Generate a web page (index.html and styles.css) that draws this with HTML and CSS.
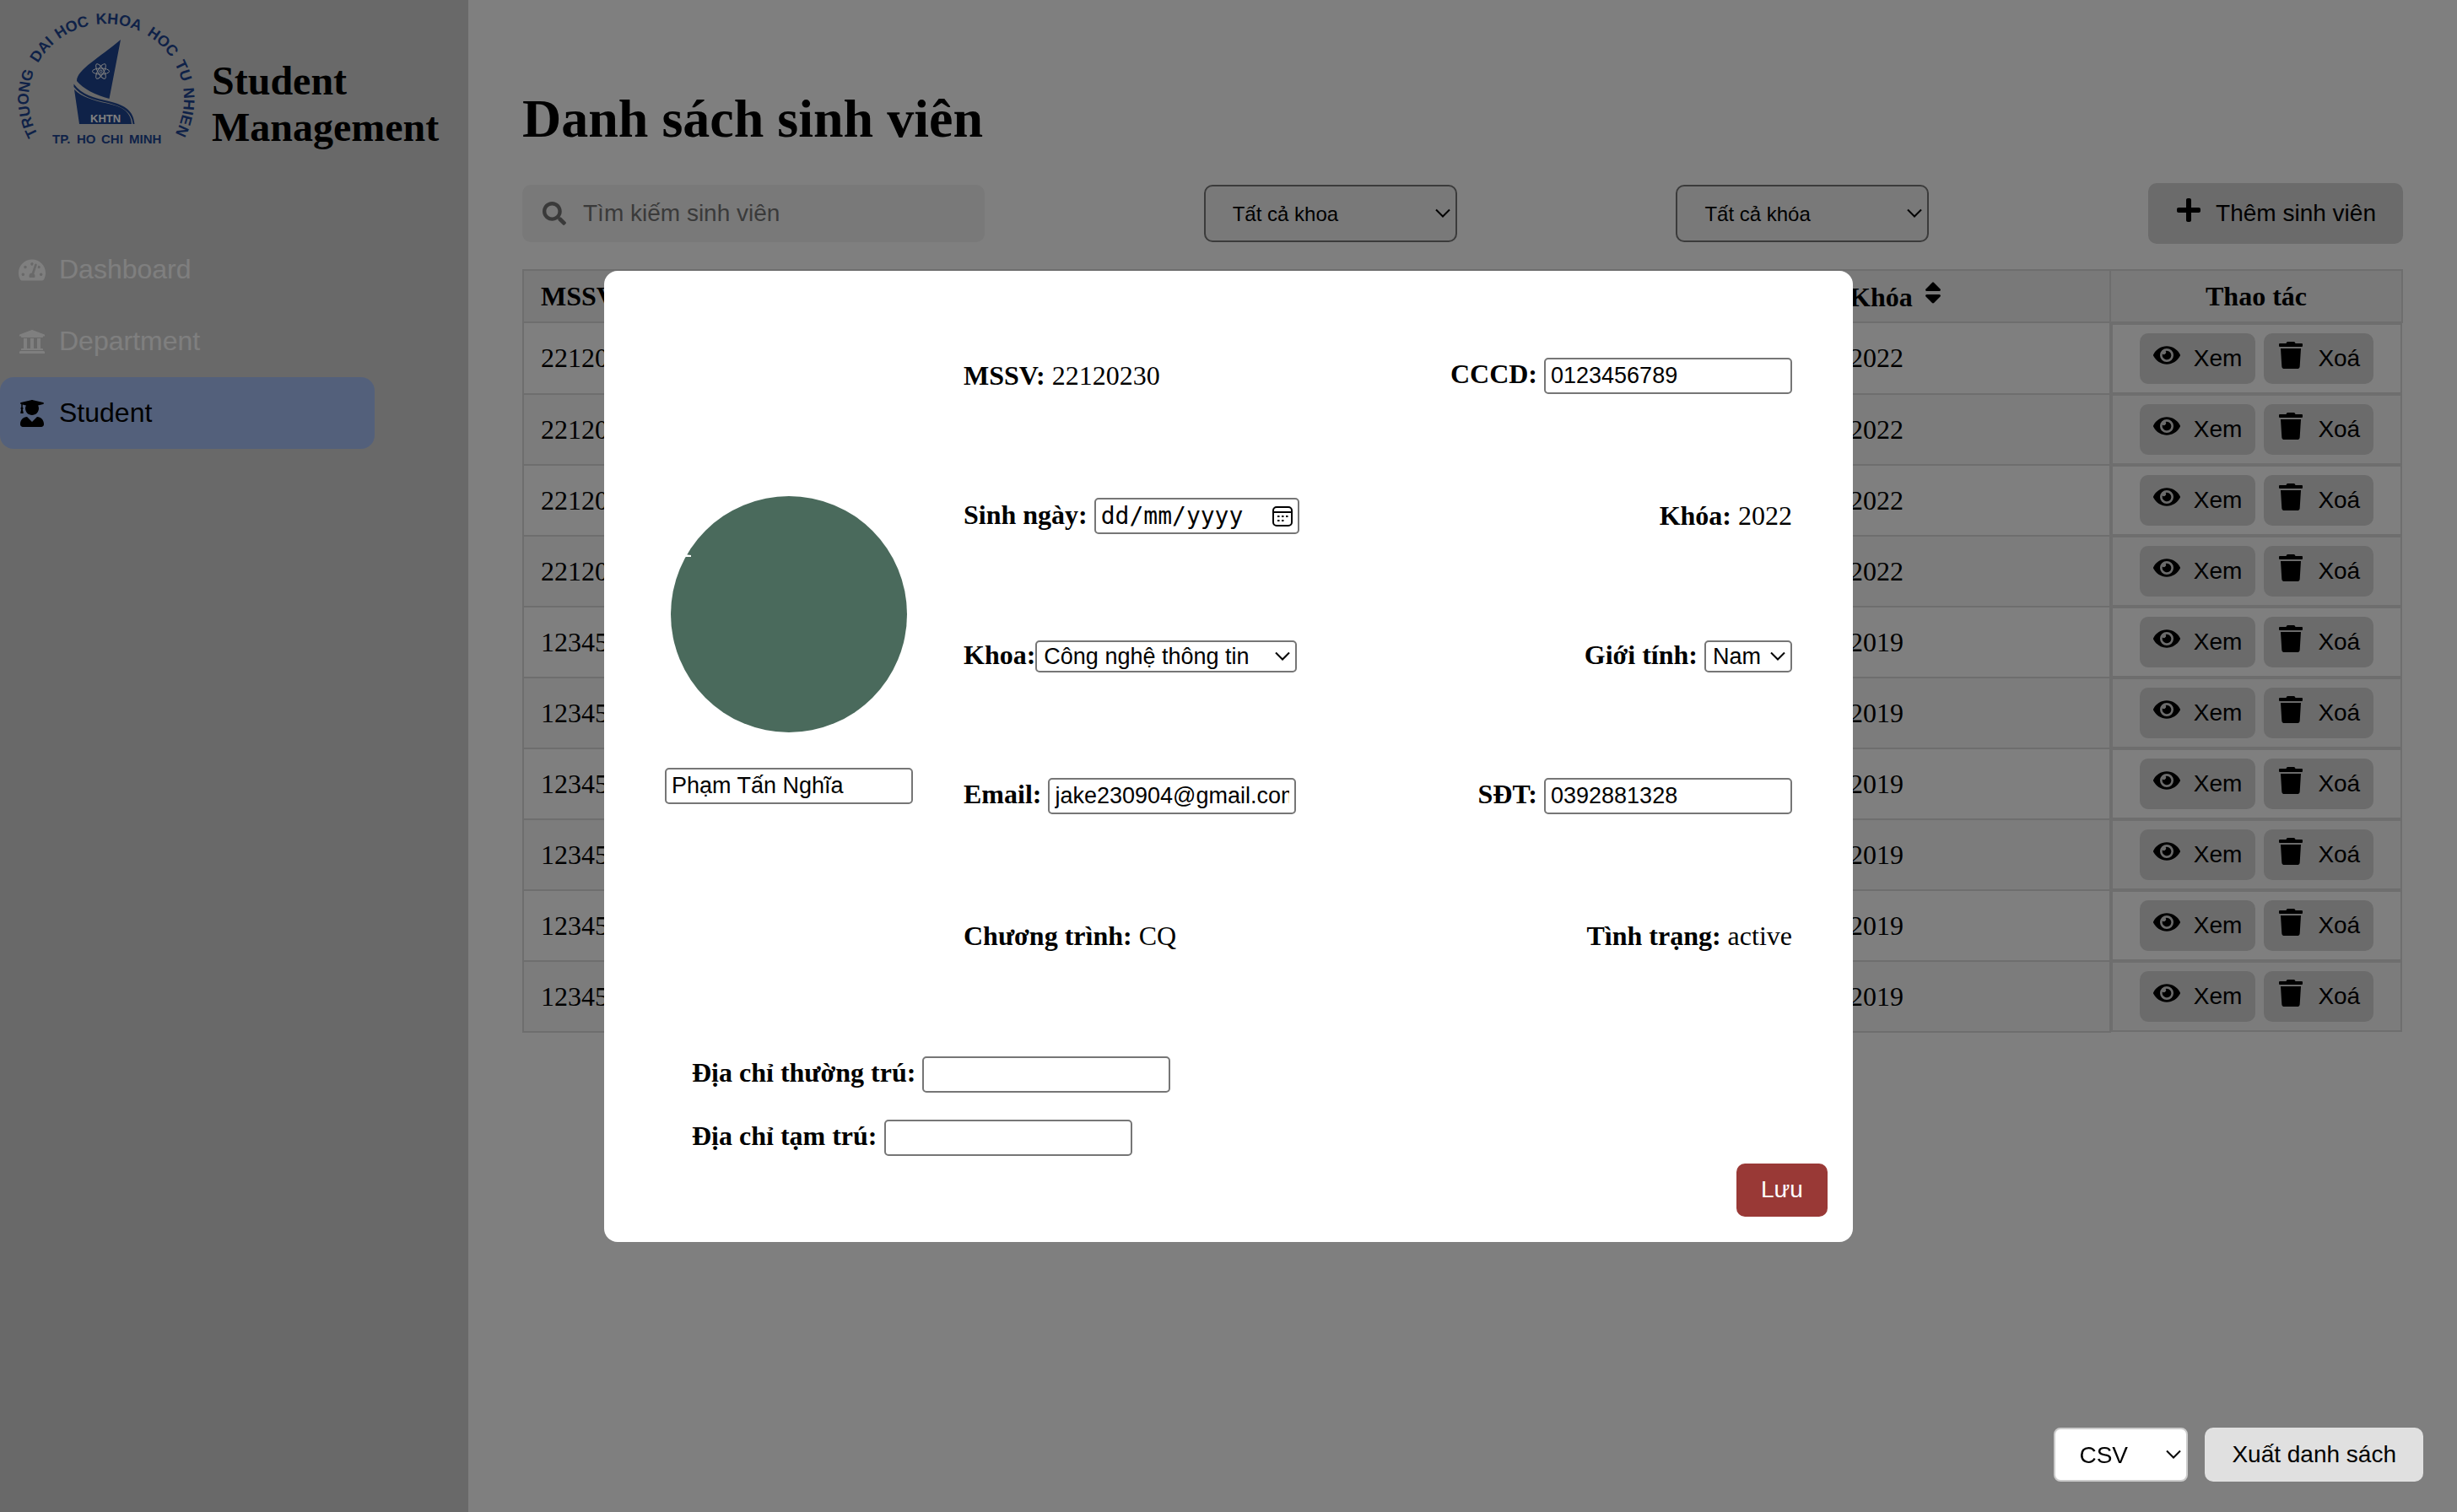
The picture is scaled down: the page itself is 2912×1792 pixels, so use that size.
FILE: index.html
```html
<!DOCTYPE html>
<html lang="vi">
<head>
<meta charset="utf-8">
<meta name="viewport" content="width=device-width, initial-scale=1">
<title>Student Management</title>
<link rel="stylesheet" href="styles.css">
</head>
<body>
<svg class="sprite" aria-hidden="true">
  <symbol id="i-gauge" viewBox="0 0 576 512"><path d="M288 32C128.94 32 0 160.94 0 320c0 52.8 14.25 102.26 39.06 144.8 5.61 9.62 16.3 15.2 27.44 15.2h443c11.14 0 21.83-5.58 27.44-15.2C561.75 422.26 576 372.8 576 320c0-159.06-128.94-288-288-288zm0 64c14.71 0 26.58 10.13 30.32 23.65-1.11 2.26-2.64 4.23-3.45 6.67l-9.22 27.67c-5.13 3.49-10.97 6.01-17.64 6.01-17.67 0-32-14.33-32-32S270.33 96 288 96zM96 384c-17.67 0-32-14.33-32-32s14.33-32 32-32 32 14.33 32 32-14.33 32-32 32zm48-160c-17.67 0-32-14.33-32-32s14.33-32 32-32 32 14.33 32 32-14.33 32-32 32zm246.77-72.41l-61.33 184C343.13 347.33 352 364.54 352 384c0 11.72-3.38 22.55-8.88 32H232.88c-5.5-9.45-8.88-20.28-8.88-32 0-33.94 26.5-61.43 59.9-63.59l61.34-184.01c4.17-12.56 17.73-19.45 30.36-15.17 12.57 4.19 19.35 17.79 15.17 30.36zm14.66 57.2l15.52-46.55c3.47-1.29 7.13-2.23 11.05-2.23 17.67 0 32 14.33 32 32s-14.33 32-32 32c-11.38-.01-20.89-6.28-26.57-15.22zM480 384c-17.67 0-32-14.33-32-32s14.33-32 32-32 32 14.33 32 32-14.33 32-32 32z"/></symbol>
  <symbol id="i-university" viewBox="0 0 512 512"><path d="M496 128v16a8 8 0 0 1-8 8h-24v12c0 6.627-5.373 12-12 12H60c-6.627 0-12-5.373-12-12v-12H24a8 8 0 0 1-8-8v-16a8 8 0 0 1 4.941-7.392l232-88a7.996 7.996 0 0 1 6.118 0l232 88A8 8 0 0 1 496 128zm-24 304H40c-13.255 0-24 10.745-24 24v16a8 8 0 0 0 8 8h464a8 8 0 0 0 8-8v-16c0-13.255-10.745-24-24-24zM96 192v192H60c-6.627 0-12 5.373-12 12v20h416v-20c0-6.627-5.373-12-12-12h-36V192h-64v192h-64V192h-64v192h-64V192H96z"/></symbol>
  <symbol id="i-graduate" viewBox="0 0 448 512"><path d="M319.4 320.6L224 416l-95.4-95.4C57.1 323.7 0 382.2 0 454.4v9.6c0 26.5 21.5 48 48 48h352c26.5 0 48-21.5 48-48v-9.6c0-72.2-57.1-130.7-128.6-133.8zM13.6 79.8l6.4 1.5v58.4c-7 4.2-12 11.5-12 20.3 0 8.4 4.6 15.4 11.1 19.7L3.5 242c-1.7 6.9 2.1 14 7.6 14h41.8c5.5 0 9.3-7.1 7.6-14l-15.6-62.3C51.4 175.4 56 168.4 56 160c0-8.8-5-16.1-12-20.3V87.1l66 15.9c-8.6 17.2-14 36.4-14 57 0 70.7 57.3 128 128 128s128-57.3 128-128c0-20.6-5.3-39.8-14-57l96.3-23.2c18.2-4.4 18.2-27.1 0-31.5l-190.4-46c-13-3.1-26.7-3.1-39.7 0L13.6 48.2c-18.1 4.4-18.1 27.2 0 31.6z"/></symbol>
  <symbol id="i-search" viewBox="0 0 512 512"><path d="M505 442.7L405.3 343c-4.5-4.5-10.6-7-17-7H372c27.6-35.3 44-79.7 44-128C416 93.1 322.9 0 208 0S0 93.1 0 208s93.1 208 208 208c48.3 0 92.7-16.4 128-44v16.3c0 6.4 2.5 12.5 7 17l99.7 99.7c9.4 9.4 24.6 9.4 33.9 0l28.3-28.3c9.4-9.4 9.4-24.6.1-34zM208 336c-70.7 0-128-57.2-128-128 0-70.7 57.2-128 128-128 70.7 0 128 57.2 128 128 0 70.7-57.2 128-128 128z"/></symbol>
  <symbol id="i-plus" viewBox="0 0 448 512"><path d="M416 208H272V64c0-17.67-14.33-32-32-32h-32c-17.67 0-32 14.33-32 32v144H32c-17.67 0-32 14.33-32 32v32c0 17.67 14.33 32 32 32h144v144c0 17.67 14.33 32 32 32h32c17.67 0 32-14.33 32-32V304h144c17.67 0 32-14.33 32-32v-32c0-17.67-14.33-32-32-32z"/></symbol>
  <symbol id="i-sort" viewBox="0 0 320 512"><path d="M41 288h238c21.4 0 32.1 25.9 17 41L177 448c-9.4 9.4-24.6 9.4-33.9 0L24 329c-15.1-15.1-4.4-41 17-41zm255-105L177 64c-9.4-9.4-24.6-9.4-33.9 0L24 183c-15.1 15.1-4.4 41 17 41h238c21.4 0 32.1-25.9 17-41z"/></symbol>
  <symbol id="i-eye" viewBox="0 0 576 512"><path d="M572.52 241.4C518.29 135.59 410.93 64 288 64S57.68 135.64 3.48 241.41a32.35 32.35 0 0 0 0 29.19C57.71 376.41 165.07 448 288 448s230.32-71.64 284.52-177.41a32.35 32.35 0 0 0 0-29.19zM288 400a144 144 0 1 1 144-144 143.93 143.93 0 0 1-144 144zm0-240a95.31 95.31 0 0 0-25.31 3.79 47.85 47.85 0 0 1-66.9 66.9A95.78 95.78 0 1 0 288 160z"/></symbol>
  <symbol id="i-trash" viewBox="0 0 448 512"><path d="M432 32H312l-9.4-18.7A24 24 0 0 0 281.1 0H166.8a23.72 23.72 0 0 0-21.4 13.3L136 32H16A16 16 0 0 0 0 48v32a16 16 0 0 0 16 16h416a16 16 0 0 0 16-16V48a16 16 0 0 0-16-16zM53.2 467a48 48 0 0 0 47.9 45h245.8a48 48 0 0 0 47.9-45L416 128H32z"/></symbol>
</svg>

<div class="app">
  <aside class="sidebar">
    <div class="brand">
      <svg class="logo" viewBox="0 0 236 190" role="img" aria-label="KHTN">
        <defs><path id="arc" d="M45 159.500A92 89 0 1 1 207 159.500"/></defs>
        <g class="logo-ring">
          <text><textPath href="#arc" startOffset="0">TRUONG</textPath></text>
          <text><textPath href="#arc" startOffset="88">DAI</textPath></text>
          <text><textPath href="#arc" startOffset="126">HOC</textPath></text>
          <text><textPath href="#arc" startOffset="174">KHOA</textPath></text>
          <text><textPath href="#arc" startOffset="236">HOC</textPath></text>
          <text><textPath href="#arc" startOffset="284">TU</textPath></text>
          <text><textPath href="#arc" startOffset="315">NHIEN</textPath></text>
        </g>
        <path d="M143 47L129.500 117C114 113 98 105 91 96C91 82 119 68 143 47Z"/>
        <path d="M88 106L94 147H156C155 131 143 126 127 122.500C110 119 97 115 88 106Z"/>
        <path d="M87.500 99.500C97 113 112 116 129 120C150 125 158 132 159.500 147H157.500C156 133 147 127 128 122C110 118 96 114 87.500 103Z"/>
        <g class="logo-atom">
          <ellipse cx="119.500" cy="84.500" rx="10" ry="3.500"/>
          <ellipse cx="119.500" cy="84.500" rx="10" ry="3.500" transform="rotate(60 119.500 84.500)"/>
          <ellipse cx="119.500" cy="84.500" rx="10" ry="3.500" transform="rotate(120 119.500 84.500)"/>
          <circle cx="119.500" cy="84.500" r="1.500"/>
        </g>
        <text class="logo-mark" x="107" y="145">KHTN</text>
        <g class="logo-city">
          <text x="62" y="170">TP.</text><text x="91" y="170">HO</text><text x="120" y="170">CHI</text><text x="153" y="170">MINH</text>
        </g>
      </svg>
      <h2 class="brand-name">Student Management</h2>
    </div>
    <nav class="nav">
      <a class="nav-link" href="#dashboard"><svg class="icon"><use href="#i-gauge"/></svg>Dashboard</a>
      <a class="nav-link" href="#department"><svg class="icon"><use href="#i-university"/></svg>Department</a>
      <a class="nav-link active" href="#student"><svg class="icon"><use href="#i-graduate"/></svg>Student</a>
    </nav>
  </aside>

  <main class="main">
    <h1 class="page-title">Danh sách sinh viên</h1>
    <div class="toolbar">
      <label class="search">
        <svg class="search-icon"><use href="#i-search"/></svg>
        <input class="search-input" type="text" placeholder="Tìm kiếm sinh viên" aria-label="Tìm kiếm sinh viên">
      </label>
      <select class="filter" aria-label="Khoa"><option>Tất cả khoa</option></select>
      <select class="filter" aria-label="Khóa"><option>Tất cả khóa</option></select>
      <button class="btn btn-add" type="button"><svg class="icon raised"><use href="#i-plus"/></svg>Thêm sinh viên</button>
    </div>

    <table class="students">
      <colgroup><col class="col-id"><col><col class="col-year"><col class="col-actions"></colgroup>
      <thead>
        <tr><th>MSSV</th><th></th><th>Khóa<svg class="icon sort"><use href="#i-sort"/></svg></th><th class="center">Thao tác</th></tr>
      </thead>
      <tbody>
        <tr><td>22120230</td><td></td><td>2022</td><td class="actions"><button class="btn" type="button"><svg class="icon raised"><use href="#i-eye"/></svg>Xem</button><button class="btn" type="button"><svg class="icon raised"><use href="#i-trash"/></svg>Xoá</button></td></tr>
        <tr><td>22120231</td><td></td><td>2022</td><td class="actions"><button class="btn" type="button"><svg class="icon raised"><use href="#i-eye"/></svg>Xem</button><button class="btn" type="button"><svg class="icon raised"><use href="#i-trash"/></svg>Xoá</button></td></tr>
        <tr><td>22120232</td><td></td><td>2022</td><td class="actions"><button class="btn" type="button"><svg class="icon raised"><use href="#i-eye"/></svg>Xem</button><button class="btn" type="button"><svg class="icon raised"><use href="#i-trash"/></svg>Xoá</button></td></tr>
        <tr><td>22120233</td><td></td><td>2022</td><td class="actions"><button class="btn" type="button"><svg class="icon raised"><use href="#i-eye"/></svg>Xem</button><button class="btn" type="button"><svg class="icon raised"><use href="#i-trash"/></svg>Xoá</button></td></tr>
        <tr><td>12345</td><td></td><td>2019</td><td class="actions"><button class="btn" type="button"><svg class="icon raised"><use href="#i-eye"/></svg>Xem</button><button class="btn" type="button"><svg class="icon raised"><use href="#i-trash"/></svg>Xoá</button></td></tr>
        <tr><td>12345</td><td></td><td>2019</td><td class="actions"><button class="btn" type="button"><svg class="icon raised"><use href="#i-eye"/></svg>Xem</button><button class="btn" type="button"><svg class="icon raised"><use href="#i-trash"/></svg>Xoá</button></td></tr>
        <tr><td>12345</td><td></td><td>2019</td><td class="actions"><button class="btn" type="button"><svg class="icon raised"><use href="#i-eye"/></svg>Xem</button><button class="btn" type="button"><svg class="icon raised"><use href="#i-trash"/></svg>Xoá</button></td></tr>
        <tr><td>12345</td><td></td><td>2019</td><td class="actions"><button class="btn" type="button"><svg class="icon raised"><use href="#i-eye"/></svg>Xem</button><button class="btn" type="button"><svg class="icon raised"><use href="#i-trash"/></svg>Xoá</button></td></tr>
        <tr><td>12345</td><td></td><td>2019</td><td class="actions"><button class="btn" type="button"><svg class="icon raised"><use href="#i-eye"/></svg>Xem</button><button class="btn" type="button"><svg class="icon raised"><use href="#i-trash"/></svg>Xoá</button></td></tr>
        <tr><td>12345</td><td></td><td>2019</td><td class="actions"><button class="btn" type="button"><svg class="icon raised"><use href="#i-eye"/></svg>Xem</button><button class="btn" type="button"><svg class="icon raised"><use href="#i-trash"/></svg>Xoá</button></td></tr>
      </tbody>
    </table>
  </main>
</div>

<div class="overlay">
  <form class="modal" role="dialog" aria-modal="true">
    <div class="profile">
      <div class="person">
        <svg class="avatar" viewBox="0 0 280 280" aria-hidden="true"><circle cx="140" cy="140" r="140"/><path class="nick" d="M0 66L20 69.500L24 70V72H0ZM35 40L38 32L44 26L30 28Z"/></svg>
        <input class="control text" type="text" value="Phạm Tấn Nghĩa" aria-label="Họ tên">
      </div>
      <div class="fields">
        <p class="field"><b>MSSV:</b> <span>22120230</span></p>
        <div class="field end"><label for="cccd">CCCD:</label><input class="control text" id="cccd" type="text" value="0123456789"></div>
        <div class="field"><label for="dob">Sinh ngày:</label>
          <span class="control date"><input class="date-input" id="dob" type="text" placeholder="dd/mm/yyyy"><svg class="calendar" viewBox="0 0 24 24" aria-hidden="true"><rect x="1" y="1" width="22" height="22" rx="4"/><path d="M1 7H23"/><path class="dots" d="M6 12h2.500M11 12h2.500M16 12h2.500M6 17h2.500M11 17h2.500"/></svg></span></div>
        <p class="field end"><b>Khóa:</b> <span>2022</span></p>
        <div class="field tight"><label for="dept">Khoa:</label><select class="control pick wide" id="dept"><option>Công nghệ thông tin</option></select></div>
        <div class="field end"><label for="sex">Giới tính:</label><select class="control pick" id="sex"><option>Nam</option></select></div>
        <div class="field"><label for="email">Email:</label><input class="control text" id="email" type="text" value="jake230904@gmail.com"></div>
        <div class="field end"><label for="phone">SĐT:</label><input class="control text" id="phone" type="text" value="0392881328"></div>
        <p class="field"><b>Chương trình:</b> <span>CQ</span></p>
        <p class="field end"><b>Tình trạng:</b> <span>active</span></p>
      </div>
    </div>
    <div class="addresses">
      <div class="field"><label for="home">Địa chỉ thường trú:</label><input class="control text" id="home" type="text"></div>
      <div class="field"><label for="temp">Địa chỉ tạm trú:</label><input class="control text" id="temp" type="text"></div>
    </div>
    <button class="save" type="button">Lưu</button>
  </form>
</div>

<div class="export">
  <select class="format" aria-label="Định dạng"><option>CSV</option></select>
  <button class="btn-export" type="button">Xuất danh sách</button>
</div>
</body>
</html>
```
FILE: styles.css
```css
:root {
  --serif: "Liberation Serif", "Times New Roman", serif;
  --sans: "Liberation Sans", Arial, sans-serif;
  --line: #dcdcdc;
  --chevron: url("data:image/svg+xml,%3Csvg xmlns='http://www.w3.org/2000/svg' width='18' height='12' viewBox='0 0 18 12' fill='none' stroke='%23000' stroke-width='2'%3E%3Cpath d='M1 1.500l8 8 8-8'/%3E%3C/svg%3E");
}

* { box-sizing: border-box; }

body {
  margin: 0;
  background: #fff;
  color: #000;
  font-family: var(--serif);
  font-size: 32px;
}

h1, h2, p { margin: 0; }

button, input, select { font-family: var(--sans); color: #000; }

select {
  appearance: none;
  background-image: var(--chevron);
  background-repeat: no-repeat;
  background-position: right 6px center;
}

.sprite { display: none; }

.icon {
  width: 32px;
  height: 32px;
  flex: none;
  fill: currentColor;
}

.raised { margin-bottom: 8px; }

.app { display: flex; min-height: 100vh; }

/* Sidebar */
.sidebar {
  width: 555px;
  flex: none;
  background: #d3d3d3;
}

.brand { display: flex; gap: 15px; }

.logo { width: 236px; height: 190px; flex: none; fill: #1e4490; }
.logo text { font-family: var(--sans); font-weight: bold; }
.logo-ring { font-size: 18px; }
.logo-city { font-size: 15px; }
.logo .logo-mark { font-size: 13px; fill: #fff; }
.logo-atom { fill: none; stroke: #fff; stroke-width: 1; }

.brand-name { padding-top: 68px; font-size: 48px; line-height: 55px; }

.nav { margin-top: 87px; }

.nav-link {
  display: flex;
  align-items: center;
  gap: 16px;
  width: 80%;
  height: 85px;
  padding: 0 22px;
  border-radius: 16px;
  color: #fff;
  font-family: var(--sans);
  font-size: 32px;
  text-decoration: none;
}

.nav-link.active { background: #a7c1f7; color: #000; }

/* Student list */
.main { flex: 1; min-width: 0; padding: 104px 64px 64px; }

.page-title { font-size: 64px; line-height: 74px; }

.toolbar {
  display: flex;
  justify-content: space-between;
  align-items: center;
  margin-top: 39px;
}

.search {
  display: flex;
  align-items: center;
  gap: 20px;
  width: 548px;
  height: 68px;
  padding: 0 24px;
  border-radius: 10px;
  background: #f2f2f2;
}

.search-icon { width: 28px; height: 28px; flex: none; fill: #757575; }

.search-input {
  flex: 1;
  min-width: 0;
  padding: 0;
  border: 0;
  background: none;
  font-size: 28px;
}

.search-input::placeholder { color: #757575; }

.filter {
  width: 300px;
  height: 68px;
  padding: 0 32px;
  border: 2px solid #767676;
  border-radius: 10px;
  background-color: #f2f2f2;
  font-size: 24px;
}

.btn {
  display: flex;
  align-items: center;
  gap: 16px;
  height: 60px;
  padding: 0 16px;
  border: 0;
  border-radius: 10px;
  background: #d6d6d6;
  font-size: 28px;
}

.btn-add { height: 72px; padding: 0 32px; }

.students {
  width: 100%;
  margin-top: 30px;
  border-collapse: collapse;
  table-layout: fixed;
}

.col-id { width: 15%; }
.col-year { width: 330px; }
.col-actions { width: 346px; }

.students th, .students td {
  height: 84px;
  padding: 0 20px;
  border: 2px solid var(--line);
  line-height: 37px;
  text-align: left;
}

.students th { height: 62px; background: #f2f2f2; }
.students .center { text-align: center; }
.students tbody tr:nth-child(even) { background: #f9f9f9; }

.students .actions {
  display: flex;
  justify-content: center;
  align-items: center;
  gap: 10px;
  padding: 0;
}

.sort { margin-left: 8px; }

/* Edit dialog */
.overlay {
  position: fixed;
  inset: 0;
  display: flex;
  justify-content: center;
  align-items: center;
  background: rgba(0, 0, 0, 0.5);
}

.modal {
  display: flex;
  flex-direction: column;
  width: 1480px;
  max-width: 90%;
  padding: 42px 30px 30px;
  border-radius: 16px;
  background: #fff;
}

.profile { display: flex; gap: 60px; padding: 0 42px; }

.person {
  display: flex;
  flex-direction: column;
  justify-content: center;
  align-items: center;
  gap: 42px;
  padding-bottom: 14px;
}

.avatar { width: 280px; height: 280px; fill: #4a6a5c; }
.avatar .nick { fill: #fff; }

.fields {
  flex: 1;
  display: grid;
  grid-template-columns: 1fr 1fr;
  grid-auto-rows: 166px;
  align-items: center;
}

.field {
  display: flex;
  align-items: baseline;
  gap: 8px;
  line-height: 37px;
}

.field label { font-weight: bold; }
.field.end { justify-content: flex-end; }
.field.tight { gap: 0; }

.control {
  border: 2px solid #767676;
  border-radius: 5px;
  background-color: #fff;
  font-size: 27px;
}

.text { width: 294px; height: 43px; padding: 0 6px; }

.pick { height: 38px; padding: 0 34px 0 8px; }
.wide { width: 310px; }

.date {
  display: flex;
  align-items: center;
  width: 243px;
  height: 43px;
  padding: 0 6px;
}

.date-input {
  flex: 1;
  min-width: 0;
  padding: 0;
  border: 0;
  font-family: "DejaVu Sans Mono", monospace;
  font-size: 28px;
}

.date-input::placeholder { color: #000; }

.calendar { width: 24px; height: 24px; flex: none; fill: none; stroke: #000; stroke-width: 2; }

.addresses {
  display: flex;
  flex-direction: column;
  gap: 32px;
  margin-top: 59px;
  padding-left: 74px;
}

.save {
  align-self: flex-end;
  width: 108px;
  height: 63px;
  margin-top: 9px;
  border: 0;
  border-radius: 10px;
  background: #993936;
  color: #fff;
  font-size: 28px;
}

/* Export bar */
.export {
  position: fixed;
  right: 40px;
  bottom: 36px;
  display: flex;
  align-items: center;
  gap: 20px;
}

.format {
  width: 159px;
  height: 64px;
  padding: 0 28px;
  border: 2px solid #ccc;
  border-radius: 8px;
  background-color: #fff;
  font-size: 28px;
}

.btn-export {
  height: 64px;
  padding: 0 32px;
  border: 0;
  border-radius: 10px;
  background: #e0e0e0;
  font-size: 28px;
}
```
